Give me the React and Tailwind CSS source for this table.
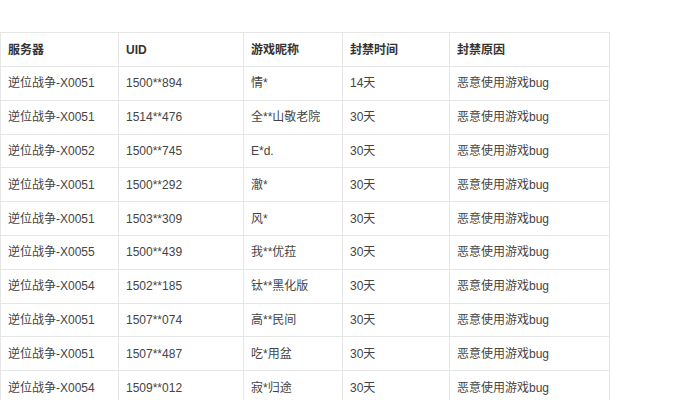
import React from "react";

const rows = [
  ["逆位战争-X0051", "1500**894", "情*", "14天", "恶意使用游戏bug"],
  ["逆位战争-X0051", "1514**476", "全**山敬老院", "30天", "恶意使用游戏bug"],
  ["逆位战争-X0052", "1500**745", "E*d.", "30天", "恶意使用游戏bug"],
  ["逆位战争-X0051", "1500**292", "澈*", "30天", "恶意使用游戏bug"],
  ["逆位战争-X0051", "1503**309", "风*", "30天", "恶意使用游戏bug"],
  ["逆位战争-X0055", "1500**439", "我**优菈", "30天", "恶意使用游戏bug"],
  ["逆位战争-X0054", "1502**185", "钛**黑化版", "30天", "恶意使用游戏bug"],
  ["逆位战争-X0051", "1507**074", "高**民间", "30天", "恶意使用游戏bug"],
  ["逆位战争-X0051", "1507**487", "吃*用盆", "30天", "恶意使用游戏bug"],
  ["逆位战争-X0054", "1509**012", "寂*归途", "30天", "恶意使用游戏bug"],
];

const widths = ["w-[118px]", "w-[125px]", "w-[99px]", "w-[107px]", "w-[160px]"];
const headers = ["服务器", "UID", "游戏昵称", "封禁时间", "封禁原因"];

export default function App() {
  return (
    <div
      className="w-[675px] h-[400px] overflow-hidden bg-white pt-[32px]"
      style={{ fontFamily: '"Liberation Sans", Arial, "Noto Sans CJK SC", sans-serif' }}
    >
      <div className="w-[610px] border-t border-l border-[#e6e6e6]">
        <div className="flex h-[34px]">
          {headers.map((h, i) => (
            <div
              key={i}
              className={`${widths[i]} shrink-0 border-r border-b border-[#e6e6e6] pl-[7px] flex items-center text-[12px] font-bold text-[#333]`}
            >
              {h}
            </div>
          ))}
        </div>
        {rows.map((r, ri) => (
          <div key={ri} className="flex h-[33.8px]">
            {r.map((c, i) => (
              <div
                key={i}
                className={`${widths[i]} shrink-0 border-r border-b border-[#e6e6e6] pl-[7px] flex items-center text-[12px] text-[#444]`}
              >
                {c}
              </div>
            ))}
          </div>
        ))}
      </div>
    </div>
  );
}
